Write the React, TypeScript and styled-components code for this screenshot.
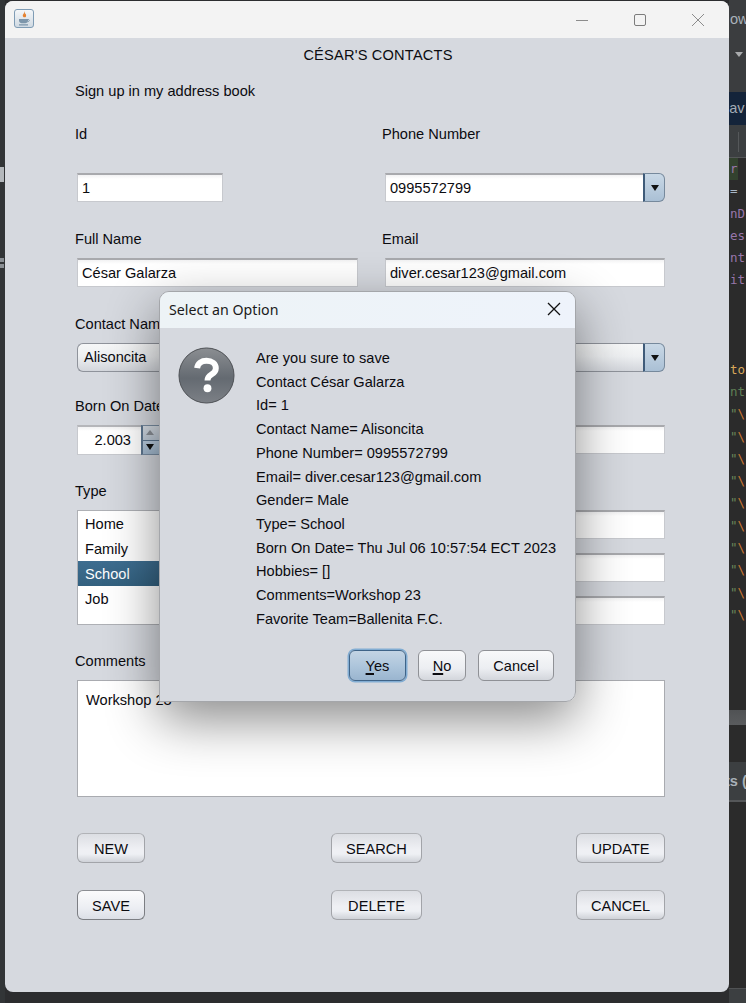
import styled, { createGlobalStyle } from "styled-components";

const GlobalStyle = createGlobalStyle`
  html, body {
    margin: 0;
    padding: 0;
    background: #2c2d2f;
  }
  * {
    box-sizing: border-box;
  }
`;

const Screen = styled.div`
  display: flex;
  width: 746px;
  height: 1003px;
  overflow: hidden;
  background: #2c2d2f;
  font-family: "Liberation Sans", Arial, sans-serif;
  font-size: 14.6px;
  color: #0b0b10;
`;

/* what peeks out of the IDE behind the window */
const LeftStrip = styled.div`
  width: 5px;
  flex: none;
  background: #323537;
  padding-top: 167px;
`;
const StripMark = styled.div<{ $h: number; $top: number; $color: string }>`
  width: 4px;
  height: ${(p) => p.$h}px;
  margin-top: ${(p) => p.$top}px;
  background: ${(p) => p.$color};
`;

const RightStrip = styled.div`
  width: 17px;
  flex: none;
  overflow: hidden;
  display: flex;
  flex-direction: column;
  white-space: nowrap;
  background: #2b2b2b;
`;
const MenuArea = styled.div`
  height: 92px;
  flex: none;
  background: #3b3d3f;
  padding: 11px 0 0 1px;
  color: #aab2ba;
  line-height: 17px;
`;
const MenuCaret = styled.div`
  width: 0;
  height: 0;
  margin: 24px 0 0 5px;
  border-left: 4px solid transparent;
  border-right: 4px solid transparent;
  border-top: 5px solid #a9abad;
`;
const TabBand = styled.div`
  height: 33px;
  flex: none;
  background: #14243a;
  color: #a3abb4;
  line-height: 33px;
  text-indent: -3px;
`;
const ToolBand = styled.div`
  height: 33px;
  flex: none;
  background: #3c3f41;
  padding: 7px 0 0 9px;
  border-bottom: 1px solid #555759;
`;
const ToolDivider = styled.div`
  width: 1px;
  height: 20px;
  background: #55585a;
`;
const CodeArea = styled.div`
  height: 552px;
  flex: none;
  font-family: "DejaVu Sans Mono", "Liberation Mono", monospace;
  font-size: 12.5px;
`;
const CodeLine = styled.div<{ $color: string; $mark?: boolean }>`
  height: 22.3px;
  line-height: 22.3px;
  padding-left: 1px;
  color: ${(p) => p.$color};
  background: ${(p) => (p.$mark ? "linear-gradient(90deg, #33422f 9px, transparent 9px)" : "none")};
`;
const Quote = styled.span`
  color: #6a8759;
`;
const Slash = styled.span`
  color: #cc7832;
`;
const ScrollBand = styled.div`
  height: 15px;
  flex: none;
  background: linear-gradient(#505254, #5a5c5e);
`;
const GapBand = styled.div<{ $h: number }>`
  height: ${(p) => p.$h}px;
  flex: none;
`;
const PanelBand = styled.div`
  height: 40px;
  flex: none;
  background: #3c3f41;
  border-bottom: 2px solid #555759;
  color: #a9b1b8;
  font-weight: 700;
  line-height: 38px;
  text-indent: -4px;
`;
const BottomBand = styled.div`
  flex: 1;
  background: #3c3f41;
  border-top: 1px solid #505254;
`;

/* the java frame */
const Frame = styled.div`
  position: relative;
  width: 724px;
  height: 991px;
  flex: none;
  margin-top: 1px;
  border-radius: 8px;
  overflow: hidden;
  background: #d6d9df;
`;
const TitleBar = styled.div`
  height: 37px;
  background: #f3f3f3;
  display: flex;
  align-items: center;
  justify-content: space-between;
  padding: 0 2px 2px 9px;
`;
const CaptionButtons = styled.div`
  display: flex;
  margin-top: 2px;
`;
const CaptionButton = styled.div`
  width: 58px;
  height: 36px;
  display: flex;
  align-items: center;
  justify-content: center;
`;

const Form = styled.div`
  padding: 9px 0 0 70px;
  width: 660px;
`;
const Heading = styled.div`
  height: 17px;
  line-height: 17px;
  text-align: center;
  padding-left: 16px;
  letter-spacing: 0.2px;
`;
const SubHeading = styled.div`
  height: 17px;
  line-height: 19px;
  margin-top: 18px;
`;
const Row = styled.div<{ $top?: number }>`
  display: grid;
  grid-template-columns: 307px 283px;
  margin-top: ${(p) => p.$top ?? 28}px;
`;
const Cell = styled.div<{ $gap?: number }>`
  display: flex;
  flex-direction: column;
  gap: ${(p) => p.$gap ?? 11}px;
`;
const RightCell = styled(Cell)`
  padding-left: 1px;
  & > :first-child {
    margin-left: -1px;
  }
`;
const Label = styled.div`
  height: 17px;
  line-height: 19px;
  white-space: nowrap;
`;
const Field = styled.div<{ $w?: number }>`
  width: ${(p) => p.$w ?? 280}px;
  height: 29px;
  margin-left: 2px;
  padding: 0 4px;
  background: linear-gradient(#f2f2f3, #ffffff 4px);
  border: 1px solid #c7c9ce;
  border-top: 2px solid #a8a9ad;
  line-height: 27px;
  white-space: nowrap;
  overflow: hidden;
`;
const FieldStack = styled.div`
  display: flex;
  flex-direction: column;
  gap: 14px;
`;
const ComboRow = styled.div`
  display: flex;
  width: 280px;
  height: 29px;
  margin-left: 2px;
`;
const ComboText = styled.div`
  flex: 1;
  padding: 0 4px;
  background: linear-gradient(#f2f2f3, #ffffff 4px);
  border: 1px solid #c7c9ce;
  border-top: 2px solid #a8a9ad;
  border-right: none;
  line-height: 27px;
`;
const ComboPlain = styled.div`
  flex: 1;
  padding: 0 6px;
  background: linear-gradient(#f6f7f8, #eef0f2 45%, #d3d6dc);
  border: 1px solid #8f939b;
  border-right: none;
  border-radius: 6px 0 0 6px;
  line-height: 27px;
  white-space: nowrap;
`;
const ComboArrow = styled.div`
  width: 22px;
  flex: none;
  display: flex;
  align-items: center;
  justify-content: center;
  background: linear-gradient(#c9d8e6, #aac0d5);
  border: 1px solid #76899c;
  border-left: 2px solid #3f5b79;
  border-radius: 0 6px 6px 0;
`;
const TriangleDown = styled.div<{ $size?: number; $color?: string }>`
  width: 0;
  height: 0;
  border-left: ${(p) => p.$size ?? 4.5}px solid transparent;
  border-right: ${(p) => p.$size ?? 4.5}px solid transparent;
  border-top: ${(p) => (p.$size ?? 4.5) + 2}px solid ${(p) => p.$color ?? "#111"};
`;
const TriangleUp = styled.div`
  width: 0;
  height: 0;
  border-left: 4px solid transparent;
  border-right: 4px solid transparent;
  border-bottom: 5px solid #8b9097;
`;
const Spinner = styled.div`
  display: flex;
  width: 83px;
  height: 30px;
  margin-left: 2px;
`;
const SpinnerText = styled.div`
  width: 64px;
  padding: 0 10px 0 0;
  text-align: right;
  background: linear-gradient(#f2f2f3, #ffffff 4px);
  border: 1px solid #c7c9ce;
  border-top: 2px solid #b5b6ba;
  border-right: none;
  line-height: 27px;
`;
const SpinnerButtons = styled.div`
  flex: 1;
  display: flex;
  flex-direction: column;
  border: 1px solid #7a8ea3;
  border-left-width: 2px;
  border-left-color: #5d7690;
`;
const SpinnerButton = styled.div<{ $down?: boolean }>`
  flex: 1;
  display: flex;
  align-items: center;
  justify-content: center;
  padding-right: 3px;
  background: ${(p) =>
    p.$down ? "linear-gradient(#bccee0, #a3bad0)" : "linear-gradient(#d9dfe6, #bfcbd8)"};
  border-top: ${(p) => (p.$down ? "1px solid #5d7690" : "none")};
`;
const ListBox = styled.div`
  width: 280px;
  height: 115px;
  margin-left: 2px;
  background: #fff;
  border: 1px solid #aeb0b5;
`;
const ListItem = styled.div<{ $selected?: boolean }>`
  height: 25px;
  line-height: 26px;
  padding-left: 7px;
  background: ${(p) => (p.$selected ? "linear-gradient(#3d6d90, #33617f)" : "transparent")};
  color: ${(p) => (p.$selected ? "#fff" : "inherit")};
`;
const TextArea = styled.div`
  width: 588px;
  height: 117px;
  margin-left: 2px;
  padding: 10px 8px;
  background: #fff;
  border: 1px solid #a9abb0;
  line-height: 18px;
`;
const ButtonGrid = styled.div`
  display: grid;
  grid-template-columns: 254px 245px 89px;
  row-gap: 27px;
  justify-items: start;
  margin: 36px 0 0 2px;
`;
const NimbusButton = styled.div<{ $w: number; $strong?: boolean }>`
  width: ${(p) => p.$w}px;
  height: 30px;
  display: flex;
  align-items: center;
  justify-content: center;
  padding-top: 1px;
  border-radius: 6px;
  border: 1px solid ${(p) => (p.$strong ? "#7c7e83" : "#a2a4a9")};
  border-top-color: ${(p) => (p.$strong ? "#8c8e93" : "#b1b3b7")};
  background: ${(p) =>
    p.$strong
      ? "linear-gradient(#fbfbfc, #eceef3 60%, #dcdfe6)"
      : "linear-gradient(#dcdee3, #eff0f4 55%, #eef0f4 72%, #cfd2d8)"};
`;

/* JOptionPane */
const Dialog = styled.div`
  position: absolute;
  left: 154px;
  top: 290px;
  width: 417px;
  height: 411px;
  display: flex;
  flex-direction: column;
  background: #d6d9df;
  border: 1px solid #a4a6aa;
  border-radius: 10px 10px 10px 0;
  overflow: hidden;
`;
const DialogShadow = styled.div`
  position: absolute;
  left: 154px;
  top: 290px;
  width: 417px;
  height: 411px;
  border-radius: 10px;
  box-shadow: 0 18px 52px rgba(0, 0, 0, 0.46);
`;
const DialogTitle = styled.div`
  height: 36px;
  flex: none;
  display: flex;
  align-items: center;
  justify-content: space-between;
  padding: 0 14px 2px 9px;
  background: linear-gradient(90deg, #edf3f6, #eef3fb);
  font-family: "Noto Sans", "Open Sans", sans-serif;
  font-size: 14.2px;
  color: #1a1a1a;
`;
const DialogBody = styled.div`
  flex: 1;
  display: flex;
  align-items: flex-start;
  padding: 19px 0 0 18px;
  gap: 21px;
`;
const MessageLines = styled.div`
  line-height: 23.7px;
  white-space: nowrap;
`;
const DialogActions = styled.div`
  display: flex;
  justify-content: flex-end;
  gap: 12px;
  padding: 0 21px 20px 0;
`;
const OptionButton = styled(NimbusButton)<{ $focus?: boolean }>`
  height: 31px;
  background: ${(p) =>
    p.$focus
      ? "linear-gradient(#c3d4e4, #aec6dc 50%, #9ab5cf)"
      : "linear-gradient(#f8f9fa, #eceef2 60%, #d3d6dc)"};
  border-color: ${(p) => (p.$focus ? "#3f6488" : "#8f9196")};
  box-shadow: ${(p) => (p.$focus ? "0 0 0 1.5px #82add3" : "none")};
`;
const Mnemonic = styled.span`
  text-decoration: underline;
  text-decoration-thickness: 2px;
  text-underline-offset: 2px;
`;

function JavaIcon() {
  return (
    <svg width="20" height="19" viewBox="0 0 20 19">
      <defs>
        <linearGradient id="javaBg" x1="0" y1="0" x2="0" y2="1">
          <stop offset="0" stopColor="#f5f7f9" />
          <stop offset="1" stopColor="#cfd9e2" />
        </linearGradient>
      </defs>
      <rect x="0.5" y="0.5" width="19" height="18" rx="2.5" fill="url(#javaBg)" stroke="#7f9cb5" />
      <path d="M10.500 2c1 2-2.500 3-1.500 5.500.4 1 2.300 1.200 2.900.3.800-1.300-.5-2 .2-3.400-1 .4-1.200 1-1.300 1.300.2-1.300.6-2.700-.3-3.700z" fill="#e5812f" />
      <path d="M5 10h9v1.500c0 1.800-1.400 2.800-2.700 2.800H7.700C6.400 14.300 5 13.300 5 11.500z" fill="#7d96ab" />
      <path d="M14 10.500c1.800-.2 1.800 2-.4 2.300" fill="none" stroke="#7d96ab" />
      <path d="M5 15.800h9" stroke="#7d96ab" strokeWidth="1.200" />
    </svg>
  );
}

function QuestionIcon() {
  return (
    <svg width="57" height="57" viewBox="0 0 58 58" style={{ flex: "none" }}>
      <defs>
        <linearGradient id="qBg" x1="0" y1="0" x2="0" y2="1">
          <stop offset="0" stopColor="#8b8e92" />
          <stop offset="0.55" stopColor="#646a71" />
          <stop offset="1" stopColor="#7c8086" />
        </linearGradient>
      </defs>
      <circle cx="29" cy="29" r="28" fill="url(#qBg)" stroke="#4c5054" strokeWidth="1" />
      <path
        d="M19.500 21.500c.5-5 4.500-7.500 9.500-7.500 5.500 0 9.500 3 9.500 7.500 0 3.500-2 5-4.500 6.500-2.500 1.500-4 2.800-4 6"
        fill="none"
        stroke="#fff"
        strokeWidth="6"
      />
      <circle cx="30" cy="42" r="4" fill="#fff" />
    </svg>
  );
}

const codeLines: { text: string; color: string; mark?: boolean }[] = [
  { text: "r", color: "#9876aa", mark: true },
  { text: "=", color: "#a9b7c6" },
  { text: "nD", color: "#9876aa" },
  { text: "es", color: "#9876aa" },
  { text: "nt", color: "#9876aa" },
  { text: "it", color: "#9876aa" },
  { text: "", color: "#a9b7c6" },
  { text: "", color: "#a9b7c6" },
  { text: "", color: "#a9b7c6" },
  { text: "to", color: "#d9a85a" },
  { text: "nt", color: "#5f7f55" },
];

const messageLines = [
  "Are you sure to save",
  "Contact César Galarza",
  "Id= 1",
  "Contact Name= Alisoncita",
  "Phone Number= 0995572799",
  "Email= diver.cesar123@gmail.com",
  "Gender= Male",
  "Type= School",
  "Born On Date= Thu Jul 06 10:57:54 ECT 2023",
  "Hobbies= []",
  "Comments=Workshop 23",
  "Favorite Team=Ballenita F.C.",
];

const types = ["Home", "Family", "School", "Job"];

function App() {
  return (
    <Screen>
      <GlobalStyle />
      <LeftStrip>
        <StripMark $h={15} $top={0} $color="#b4b8bc" />
        <StripMark $h={4} $top={76} $color="#8a8f94" />
        <StripMark $h={4} $top={2} $color="#8a8f94" />
      </LeftStrip>

      <Frame>
        <TitleBar>
          <JavaIcon />
          <CaptionButtons>
            <CaptionButton>
              <svg width="14" height="14" viewBox="0 0 14 14">
                <path d="M1 7.500h12" stroke="#8c8c8c" strokeWidth="1" />
              </svg>
            </CaptionButton>
            <CaptionButton>
              <svg width="14" height="14" viewBox="0 0 14 14">
                <rect x="1.500" y="1.500" width="11" height="11" rx="1.500" fill="none" stroke="#7c7c7c" />
              </svg>
            </CaptionButton>
            <CaptionButton>
              <svg width="14" height="14" viewBox="0 0 14 14">
                <path d="M1 1l12 12M13 1L1 13" stroke="#8c8c8c" strokeWidth="1" />
              </svg>
            </CaptionButton>
          </CaptionButtons>
        </TitleBar>

        <Form>
          <Heading>CÉSAR'S CONTACTS</Heading>
          <SubHeading>Sign up in my address book</SubHeading>

          <Row $top={26}>
            <Cell $gap={31}>
              <Label>Id</Label>
              <Field $w={146}>1</Field>
            </Cell>
            <RightCell $gap={31}>
              <Label>Phone Number</Label>
              <ComboRow>
                <ComboText>0995572799</ComboText>
                <ComboArrow>
                  <TriangleDown />
                </ComboArrow>
              </ComboRow>
            </RightCell>
          </Row>

          <Row>
            <Cell>
              <Label>Full Name</Label>
              <Field $w={281}>César Galarza</Field>
            </Cell>
            <RightCell>
              <Label>Email</Label>
              <Field>diver.cesar123@gmail.com</Field>
            </RightCell>
          </Row>

          <Row>
            <Cell>
              <Label>Contact Name</Label>
              <ComboRow>
                <ComboPlain>Alisoncita</ComboPlain>
              </ComboRow>
            </Cell>
            <RightCell>
              <Label />
              <ComboRow>
                <ComboPlain />
                <ComboArrow>
                  <TriangleDown />
                </ComboArrow>
              </ComboRow>
            </RightCell>
          </Row>

          <Row $top={25}>
            <Cell>
              <Label>Born On Date</Label>
              <Spinner>
                <SpinnerText>2.003</SpinnerText>
                <SpinnerButtons>
                  <SpinnerButton>
                    <TriangleUp />
                  </SpinnerButton>
                  <SpinnerButton $down>
                    <TriangleDown $size={4} />
                  </SpinnerButton>
                </SpinnerButtons>
              </Spinner>
            </Cell>
            <RightCell>
              <Label />
              <Field />
            </RightCell>
          </Row>

          <Row $top={27}>
            <Cell>
              <Label>Type</Label>
              <ListBox>
                {types.map((type) => (
                  <ListItem key={type} $selected={type === "School"}>
                    {type}
                  </ListItem>
                ))}
              </ListBox>
            </Cell>
            <RightCell>
              <Label />
              <FieldStack>
                <Field />
                <Field />
                <Field />
              </FieldStack>
            </RightCell>
          </Row>

          <Row $top={27}>
            <Cell>
              <Label>Comments</Label>
              <TextArea>Workshop 23</TextArea>
            </Cell>
          </Row>

          <ButtonGrid>
            <NimbusButton $w={68}>NEW</NimbusButton>
            <NimbusButton $w={91}>SEARCH</NimbusButton>
            <NimbusButton $w={89}>UPDATE</NimbusButton>
            <NimbusButton $w={68} $strong>
              SAVE
            </NimbusButton>
            <NimbusButton $w={91}>DELETE</NimbusButton>
            <NimbusButton $w={89}>CANCEL</NimbusButton>
          </ButtonGrid>
        </Form>

        <DialogShadow />
        <Dialog>
          <DialogTitle>
            Select an Option
            <svg width="14" height="14" viewBox="0 0 14 14">
              <path d="M1 1l12 12M13 1L1 13" stroke="#111" strokeWidth="1.300" />
            </svg>
          </DialogTitle>
          <DialogBody>
            <QuestionIcon />
            <MessageLines>
              {messageLines.map((line) => (
                <div key={line}>{line}</div>
              ))}
            </MessageLines>
          </DialogBody>
          <DialogActions>
            <OptionButton $w={57} $focus>
              <span>
                <Mnemonic>Y</Mnemonic>es
              </span>
            </OptionButton>
            <OptionButton $w={48}>
              <span>
                <Mnemonic>N</Mnemonic>o
              </span>
            </OptionButton>
            <OptionButton $w={76}>Cancel</OptionButton>
          </DialogActions>
        </Dialog>
      </Frame>

      <RightStrip>
        <MenuArea>
          ow
          <MenuCaret />
        </MenuArea>
        <TabBand>jav</TabBand>
        <ToolBand>
          <ToolDivider />
        </ToolBand>
        <CodeArea>
          {codeLines.map((line, i) => (
            <CodeLine key={i} $color={line.color} $mark={line.mark}>
              {line.text}
            </CodeLine>
          ))}
          {Array.from({ length: 10 }, (_, i) => (
            <CodeLine key={`q${i}`} $color="#6a8759">
              <Quote>"</Quote>
              <Slash>\</Slash>
            </CodeLine>
          ))}
        </CodeArea>
        <ScrollBand />
        <GapBand $h={37} />
        <PanelBand>ts (</PanelBand>
        <GapBand $h={186} />
        <BottomBand />
      </RightStrip>
    </Screen>
  );
}

export default App;
